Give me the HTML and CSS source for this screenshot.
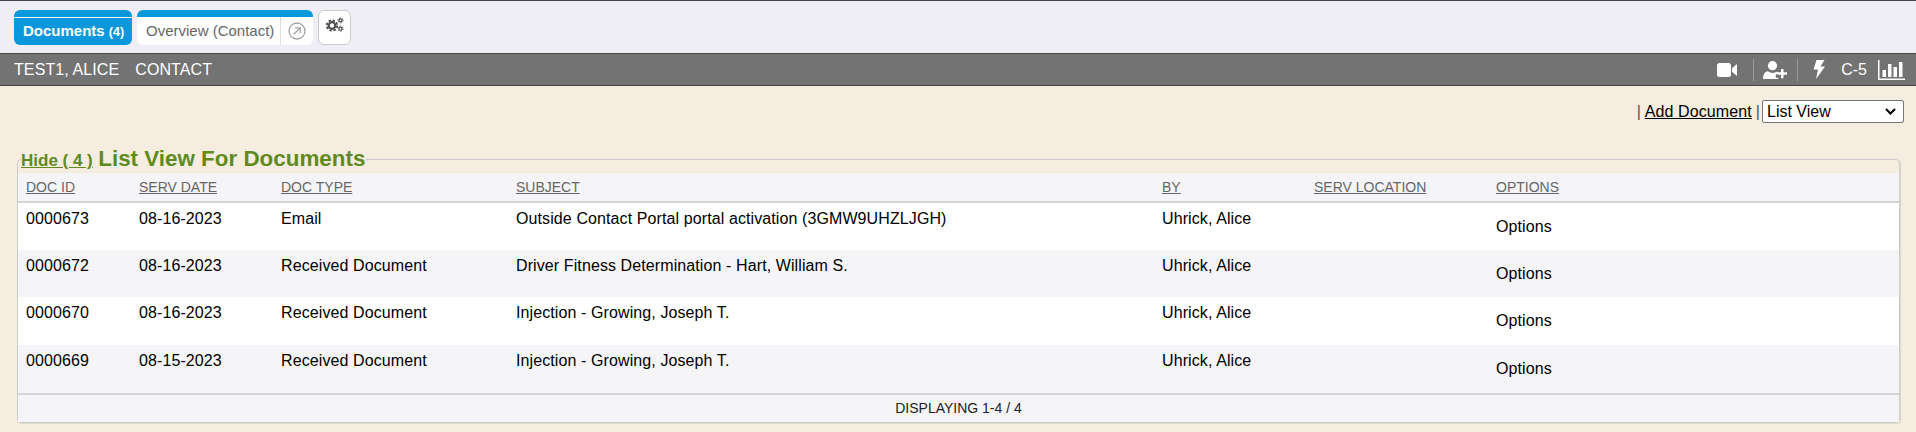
FILE: index.html
```html
<!DOCTYPE html>
<html lang="en">
<head>
    <meta charset="UTF-8">
    <title>Documents</title>
    <link rel="stylesheet" href="styles.css">
</head>
<body>

    <div class="tabbar">
        <a class="tab tab-active"><span class="tab-label">Documents <small>(4)</small></span></a>
        <a class="tab">
            <span class="tab-label tab-label-wide">Overview (Contact)</span>
            <span class="tab-pop">
                <svg width="18" height="18" viewBox="0 0 18 18" fill="none" stroke="#a3a3a3">
                    <circle cx="9" cy="9" r="8" stroke-width="1.3"/>
                    <path d="M5.500 12.500L12 6M7 5.800h5.200V11" stroke-width="1.300"/>
                </svg>
            </span>
        </a>
        <a class="gear-btn">
            <svg width="18" height="15" viewBox="0 0 18 15" fill="none" stroke="#4d4d4d">
                <circle cx="6" cy="8.500" r="3.300" stroke-width="2.200"/>
                <circle cx="6" cy="8.500" r="5.200" stroke-width="1.800" stroke-dasharray="2.400 1.680"/>
                <circle cx="14.500" cy="3.300" r="1.500" stroke-width="1.300"/>
                <circle cx="14.500" cy="3.300" r="2.600" stroke-width="1" stroke-dasharray="1.300 1.420"/>
                <circle cx="14.500" cy="11.700" r="1.500" stroke-width="1.300"/>
                <circle cx="14.500" cy="11.700" r="2.600" stroke-width="1" stroke-dasharray="1.300 1.420"/>
            </svg>
        </a>
    </div>

    <div class="patient-bar">
        <div class="patient-name">
            <span>TEST1, ALICE</span>
            <span>CONTACT</span>
        </div>
        <div class="patient-tools">
            <svg width="20" height="14" viewBox="0 0 20 14" fill="#fff">
                <rect x="0" y="0" width="14" height="14" rx="2.500"/>
                <path d="M15 5.200L20 1V13L15 8.800z"/>
            </svg>
            <span class="tool-sep sep-first"></span>
            <svg width="24" height="18" viewBox="0 0 24 18" fill="#fff">
                <circle cx="9.500" cy="4.700" r="4.600"/>
                <path d="M0 18c0-5 2-7.800 5-7.800 1.500 1.200 3 1.700 4.500 1.700s2.700-.4 3.800-1.200c.8.100 1.500.4 2 .8v1.800h-2.500v3.500h2.500V18z"/>
                <path d="M18 8h2.500v3.300H24v2.500h-3.500v3.500H18v-3.500h-3.500v-2.500H18z"/>
            </svg>
            <span class="tool-sep"></span>
            <svg class="tool-bolt" width="12" height="19" viewBox="0 0 12 19" fill="#fff">
                <path d="M3.500 0h8L7.500 6.500H12L3 19l2-9.500H0.500z"/>
            </svg>
            <span class="tool-text">C-5</span>
            <svg width="27" height="20" viewBox="0 0 27 20" fill="#fff">
                <path d="M0 0h1.500v18.500H27V20H0z"/>
                <rect x="4.500" y="10" width="3.500" height="7"/>
                <rect x="10" y="4" width="3.500" height="13"/>
                <rect x="15.500" y="7" width="3.500" height="10"/>
                <rect x="21" y="2" width="3.500" height="15"/>
            </svg>
        </div>
    </div>

    <div class="content">
        <div class="actions">
            <span class="pipe">|</span>
            <a href="#">Add Document</a>
            <span class="pipe pipe-last">|</span>
            <select>
                <option>List View</option>
            </select>
        </div>

        <fieldset class="panel">
            <legend><a href="#">Hide ( 4 )</a> <span class="panel-title">List View For Documents</span></legend>
            <table>
                <thead>
                    <tr>
                        <th class="col-id"><a href="#">DOC ID</a></th>
                        <th class="col-date"><a href="#">SERV DATE</a></th>
                        <th class="col-type"><a href="#">DOC TYPE</a></th>
                        <th class="col-subject"><a href="#">SUBJECT</a></th>
                        <th class="col-by"><a href="#">BY</a></th>
                        <th class="col-loc"><a href="#">SERV LOCATION</a></th>
                        <th><a href="#">OPTIONS</a></th>
                    </tr>
                </thead>
                <tbody>
                    <tr>
                        <td>0000673</td>
                        <td>08-16-2023</td>
                        <td>Email</td>
                        <td>Outside Contact Portal portal activation (3GMW9UHZLJGH)</td>
                        <td>Uhrick, Alice</td>
                        <td></td>
                        <td class="opt">Options</td>
                    </tr>
                    <tr>
                        <td>0000672</td>
                        <td>08-16-2023</td>
                        <td>Received Document</td>
                        <td>Driver Fitness Determination - Hart, William S.</td>
                        <td>Uhrick, Alice</td>
                        <td></td>
                        <td class="opt">Options</td>
                    </tr>
                    <tr>
                        <td>0000670</td>
                        <td>08-16-2023</td>
                        <td>Received Document</td>
                        <td>Injection - Growing, Joseph T.</td>
                        <td>Uhrick, Alice</td>
                        <td></td>
                        <td class="opt">Options</td>
                    </tr>
                    <tr>
                        <td>0000669</td>
                        <td>08-15-2023</td>
                        <td>Received Document</td>
                        <td>Injection - Growing, Joseph T.</td>
                        <td>Uhrick, Alice</td>
                        <td></td>
                        <td class="opt">Options</td>
                    </tr>
                </tbody>
            </table>
            <div class="panel-foot">DISPLAYING 1-4 / 4</div>
        </fieldset>
    </div>

</body>
</html>
```

FILE: styles.css
```css
* {
    box-sizing: border-box;
}
html, body {
    height: 100%;
}
body {
    margin: 0;
    font-family: "Liberation Sans", Arial, sans-serif;
    background-color: #f5eddf;
    overflow: hidden;
}
.tabbar {
    height: 53px;
    display: flex;
    align-items: flex-start;
    gap: 5px;
    padding: 9px 0 0 14px;
    background-color: #eeeef4;
    border-top: 1px solid #444;
}
.tab {
    height: 35px;
    display: flex;
    background-color: #fff;
    border-top: 7px solid #0b97dc;
    border-radius: 6px;
    font-size: 15px;
    color: #666;
}
.tab-label {
    padding: 0 5px 0 9px;
    line-height: 28px;
}
.tab-label-wide {
    padding-right: 6px;
}
.tab-active {
    width: 118px;
    background-color: #0b97dc;
    color: #fff;
    font-weight: bold;
    box-shadow: inset 0 1px 0 #fff;
}
.tab-active small {
    font-size: 12.5px;
}
.tab-pop {
    width: 33px;
    display: flex;
    align-items: center;
    justify-content: center;
    border-left: 1px solid #ddd;
}
.gear-btn {
    width: 33px;
    height: 35px;
    display: flex;
    align-items: center;
    justify-content: center;
    background-color: #fff;
    border: 1px solid #ccc;
    border-radius: 6px;
    padding-bottom: 6px;
}
.patient-bar {
    height: 33px;
    display: flex;
    justify-content: space-between;
    align-items: center;
    padding: 0 11px 0 14px;
    background-color: #737373;
    border-top: 1px solid #444;
    border-bottom: 1px solid #444;
    color: #fff;
    font-size: 16px;
}
.patient-name {
    display: flex;
    gap: 16px;
    letter-spacing: 0.1px;
}
.patient-tools {
    display: flex;
    align-items: center;
}
.tool-sep {
    width: 1px;
    height: 22px;
    margin: 0 10px;
    background-color: #999;
}
.sep-first {
    margin: 0 9px 0 16px;
}
.tool-bolt {
    margin: 0 16px 0 5px;
}
.tool-text {
    margin-right: 11px;
}
.content {
    padding: 14px 16px 0 17px;
}
.actions {
    display: flex;
    justify-content: flex-end;
    align-items: center;
    gap: 4px;
    margin-right: -4px;
    font-size: 16px;
}
.actions a {
    color: #000;
    letter-spacing: 0.1px;
}
.pipe {
    color: #555;
}
.pipe-last {
    margin-right: -2px;
}
.actions select {
    appearance: none;
    width: 142px;
    height: 23px;
    padding: 0 0 0 4px;
    background: #fff url("data:image/svg+xml,%3Csvg xmlns='http://www.w3.org/2000/svg' width='11' height='7' viewBox='0 0 11 7'%3E%3Cpath d='M1 1l4.500 4.500L10 1' fill='none' stroke='%23000' stroke-width='2'/%3E%3C/svg%3E") no-repeat right 7px center;
    border: 1px solid #767676;
    border-radius: 2px;
    font-family: inherit;
    font-size: 16px;
    color: #000;
}
.panel {
    margin: 22px 0 0 0;
    padding: 0;
    min-width: 0;
    border: 1px solid #ccc;
    border-radius: 4px;
    box-shadow: 1px 1px 1px rgba(0, 0, 0, 0.1);
}
legend {
    height: 28px;
    margin-left: 3px;
    padding: 0 1px 0 0;
    color: #5f8a1e;
    font-weight: bold;
    line-height: 28px;
}
legend a {
    color: #5f8a1e;
    font-size: 17px;
}
.panel-title {
    margin-left: 1px;
    font-size: 22.4px;
}
table {
    width: 100%;
    border-collapse: collapse;
    table-layout: fixed;
}
th {
    height: 29px;
    padding: 0 8px;
    text-align: left;
    background-color: #f5f5f8;
    border-bottom: 2px solid #d5d5d8;
    font-size: 14px;
    font-weight: normal;
}
th a {
    color: #666;
}
.col-id { width: 113px; }
.col-date { width: 142px; }
.col-type { width: 235px; }
.col-subject { width: 646px; }
.col-by { width: 152px; }
.col-loc { width: 182px; }
td {
    height: 47.7px;
    padding: 7px 8px 0;
    vertical-align: top;
    font-size: 16px;
    letter-spacing: 0.1px;
    color: #000;
}
td.opt {
    padding-top: 15px;
}
tbody tr:nth-child(even) td {
    background-color: #f5f5f8;
}
tbody tr {
    background-color: #fff;
}
.panel-foot {
    height: 29px;
    line-height: 27px;
    text-align: center;
    background-color: #f5f5f8;
    border-top: 2px solid #d5d5d8;
    font-size: 14px;
    color: #222;
}
```
